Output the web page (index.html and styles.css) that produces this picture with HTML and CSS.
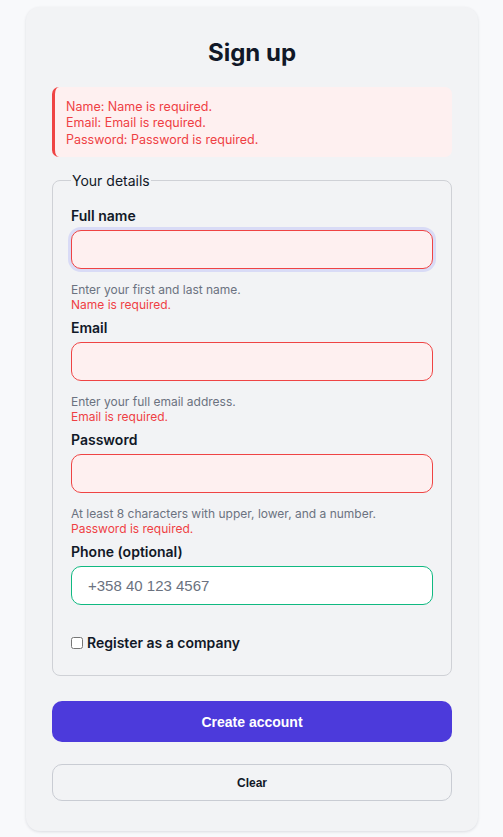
FILE: index.html
```html
<!DOCTYPE html>
<html lang="en">
<head>
<meta charset="utf-8">
<title>Sign up</title>
<link rel="stylesheet" href="styles.css">
</head>
<body>
<main class="card">
  <h1 class="title">Sign up</h1>
  <ul class="summary">
    <li>Name: Name is required.</li>
    <li>Email: Email is required.</li>
    <li>Password: Password is required.</li>
  </ul>
  <fieldset class="details">
    <legend class="legend">Your details</legend>
    <div class="field">
      <label class="label" for="name">Full name</label>
      <input class="input input-error input-focus" id="name" type="text" autofocus>
      <p class="hint">Enter your first and last name.</p>
      <p class="error">Name is required.</p>
    </div>
    <div class="field">
      <label class="label" for="email">Email</label>
      <input class="input input-error" id="email" type="email">
      <p class="hint">Enter your full email address.</p>
      <p class="error">Email is required.</p>
    </div>
    <div class="field">
      <label class="label" for="password">Password</label>
      <input class="input input-error" id="password" type="password">
      <p class="hint">At least 8 characters with upper, lower, and a number.</p>
      <p class="error">Password is required.</p>
    </div>
    <div class="field field-last">
      <label class="label" for="phone">Phone (optional)</label>
      <input class="input input-ok" id="phone" type="tel" placeholder="+358 40 123 4567">
    </div>
    <label class="check">
      <input class="checkbox" type="checkbox">
      <span>Register as a company</span>
    </label>
  </fieldset>
  <button class="btn btn-primary" type="button">Create account</button>
  <button class="btn btn-secondary" type="button">Clear</button>
</main>
</body>
</html>
```

FILE: styles.css
```css
* { box-sizing: border-box; }

html, body {
  margin: 0;
  padding: 0;
}

body {
  background: #f8f9fb;
  font-family: Inter, "Noto Sans", "Liberation Sans", sans-serif;
  color: #111827;
  padding: 7px 25px 6px 26px;
}

.card {
  background: #f2f3f5;
  border-radius: 14px;
  box-shadow: 0 1px 3px rgba(15, 23, 42, 0.12);
  padding: 31px 26px 30px;
  display: flex;
  flex-direction: column;
}

.title {
  margin: 0;
  text-align: center;
  font-size: 24px;
  line-height: 29px;
  font-weight: 700;
  color: #111827;
}

.summary {
  margin: 20px 0 0;
  padding: 12px 14px 9px 11px;
  list-style: none;
  background: #fef0f0;
  border-left: 3px solid #ef4444;
  border-radius: 7px;
  color: #ef3f44;
  font-size: 12.5px;
  line-height: 16.4px;
}

.details {
  margin: 15px 0 0;
  padding: 18px 18px 24px;
  border: 1px solid #cfd1d6;
  border-radius: 8px;
  min-width: 0;
}

.legend {
  padding: 0 1px;
  font-size: 14px;
  line-height: 17px;
  color: #111827;
}

.field {
  display: flex;
  flex-direction: column;
  margin-bottom: 7px;
}

.field-last {
  margin-bottom: 29px;
}

.label {
  font-size: 14px;
  line-height: 17px;
  font-weight: 600;
  color: #111827;
  margin-bottom: 6px;
}

.input {
  height: 39px;
  width: 100%;
  border-radius: 10px;
  border: 1px solid #d1d5db;
  background: #fff;
  padding: 0 16px;
  font-family: "Liberation Sans", Arial, sans-serif;
  font-size: 15px;
  color: #111827;
  outline: none;
  caret-color: #111827;
}

.input::placeholder {
  color: #6b7280;
}

.input-error {
  border-color: #ef4444;
  background: #fef0f0;
}

.input-focus {
  box-shadow: 0 0 0 3px #d9dbf6;
}

.input-ok {
  border-color: #10b981;
  background: #fff;
}

.hint {
  margin: 13px 0 0;
  font-size: 12px;
  line-height: 15px;
  color: #6b7280;
}

.error {
  margin: 0;
  font-size: 12px;
  line-height: 15px;
  color: #ef3f44;
}

.check {
  display: flex;
  align-items: center;
  gap: 4px;
  font-size: 14px;
  line-height: 17px;
  font-weight: 600;
  color: #111827;
}

.checkbox {
  margin: 0;
  width: 12px;
  height: 12px;
}

.btn {
  width: 100%;
  border-radius: 10px;
  font-family: "Liberation Sans", Arial, sans-serif;
  font-weight: 700;
  cursor: pointer;
}

.btn-primary {
  margin-top: 25px;
  height: 41px;
  border: none;
  background: #4c3adb;
  color: #fff;
  font-size: 14px;
}

.btn-secondary {
  margin-top: 22px;
  height: 37px;
  border: 1px solid #c9ccd3;
  background: transparent;
  color: #111827;
  font-size: 12px;
}
```
